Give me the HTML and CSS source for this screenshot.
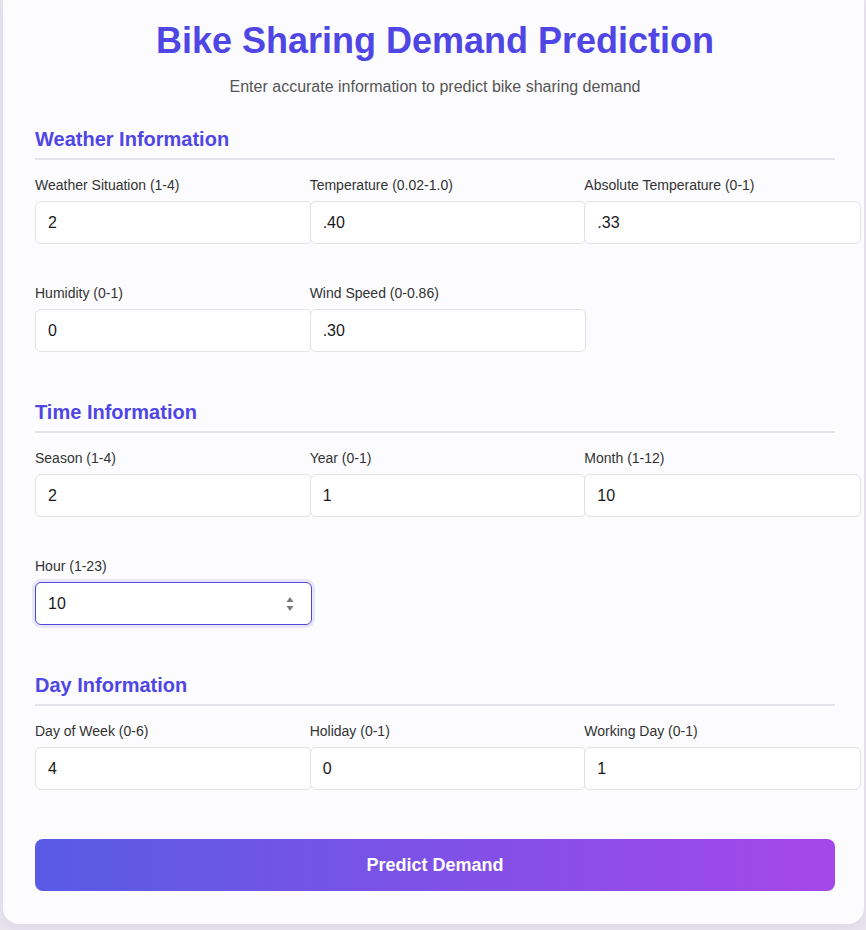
FILE: index.html
```html
<!DOCTYPE html>
<html lang="en">
<head>
<meta charset="utf-8">
<title>Bike Sharing Demand Prediction</title>
<link rel="stylesheet" href="styles.css">
</head>
<body>
<main class="card">
  <header class="header">
    <h1 class="title">Bike Sharing Demand Prediction</h1>
    <p class="subtitle">Enter accurate information to predict bike sharing demand</p>
  </header>

  <section class="section">
    <h2 class="section-title">Weather Information</h2>
    <div class="grid">
      <div class="field"><label class="label">Weather Situation (1-4)</label><input class="input" type="text" value="2"></div>
      <div class="field"><label class="label">Temperature (0.02-1.0)</label><input class="input" type="text" value=".40"></div>
      <div class="field"><label class="label">Absolute Temperature (0-1)</label><input class="input" type="text" value=".33"></div>
      <div class="field"><label class="label">Humidity (0-1)</label><input class="input" type="text" value="0"></div>
      <div class="field"><label class="label">Wind Speed (0-0.86)</label><input class="input" type="text" value=".30"></div>
    </div>
  </section>

  <section class="section">
    <h2 class="section-title">Time Information</h2>
    <div class="grid">
      <div class="field"><label class="label">Season (1-4)</label><input class="input" type="text" value="2"></div>
      <div class="field"><label class="label">Year (0-1)</label><input class="input" type="text" value="1"></div>
      <div class="field"><label class="label">Month (1-12)</label><input class="input" type="text" value="10"></div>
      <div class="field">
        <label class="label">Hour (1-23)</label>
        <div class="input-wrap">
          <input class="input input-focus" type="text" value="10">
          <svg class="spinner" width="8" height="14" viewBox="0 0 8 14"><path d="M4 0 L7.5 5 L0.5 5 Z" fill="#7b7b7b"/><path d="M0.5 9 L7.5 9 L4 14 Z" fill="#7b7b7b"/></svg>
        </div>
      </div>
    </div>
  </section>

  <section class="section">
    <h2 class="section-title">Day Information</h2>
    <div class="grid">
      <div class="field"><label class="label">Day of Week (0-6)</label><input class="input" type="text" value="4"></div>
      <div class="field"><label class="label">Holiday (0-1)</label><input class="input" type="text" value="0"></div>
      <div class="field"><label class="label">Working Day (0-1)</label><input class="input" type="text" value="1"></div>
    </div>
  </section>

  <button class="submit" type="button">Predict Demand</button>
</main>
</body>
</html>
```

FILE: styles.css
```css
html, body {
  margin: 0;
  padding: 0;
}
body {
  background: #e8e5ef;
  font-family: "Liberation Sans", Arial, sans-serif;
  padding: 0 2px 6px 3px;
}
.card {
  background: #fcfcfe;
  border-radius: 0 0 16px 16px;
  padding: 21px 29px 33px 32px;
  box-shadow: 0 4px 12px rgba(90, 70, 140, 0.08);
}
.header {
  text-align: center;
  margin-bottom: 32px;
}
.title {
  margin: 0 0 17px 0;
  font-size: 36px;
  line-height: 40px;
  font-weight: 700;
  color: #4f46e5;
}
.subtitle {
  margin: 0;
  font-size: 16px;
  line-height: 18px;
  color: #555555;
}
.section {
  margin-bottom: 49px;
}
.section-title {
  margin: 0 0 17px 0;
  font-size: 20px;
  line-height: 22px;
  font-weight: 700;
  color: #4f46e5;
  padding-bottom: 8px;
  border-bottom: 2px solid #e4e4ea;
}
.grid {
  display: grid;
  grid-template-columns: repeat(3, 1fr);
  column-gap: 24px;
  row-gap: 41px;
}
.field {
  min-width: 0;
}
.label {
  display: block;
  font-size: 14px;
  line-height: 16px;
  color: #333333;
  margin-bottom: 8px;
}
.input-wrap {
  position: relative;
}
.input {
  display: block;
  width: 100%;
  box-sizing: content-box;
  font-family: "Liberation Sans", Arial, sans-serif;
  font-size: 16px;
  line-height: 19px;
  height: 19px;
  padding: 11px 12px;
  border: 1px solid #e1e1e8;
  border-radius: 6px;
  background: #ffffff;
  color: #1a1a1a;
  outline: none;
}
.input-focus {
  border-color: #5146d6;
  box-shadow: 0 0 0 3px rgba(79, 70, 229, 0.12);
}
.spinner {
  position: absolute;
  left: 251px;
  top: 15px;
}
.submit {
  display: block;
  width: 100%;
  height: 52px;
  border: none;
  border-radius: 8px;
  background: linear-gradient(90deg, #585be6, #a547e8);
  color: #ffffff;
  font-family: "Liberation Sans", Arial, sans-serif;
  font-size: 18px;
  font-weight: 700;
  cursor: pointer;
}
```
